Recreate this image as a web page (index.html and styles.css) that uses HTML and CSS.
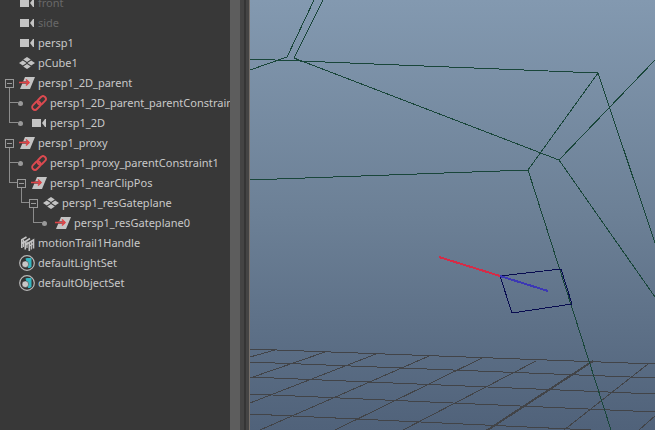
FILE: index.html
```html
<!DOCTYPE html>
<html lang="en">
<head>
<meta charset="utf-8">
<title>Outliner and viewport</title>
<link rel="stylesheet" href="styles.css">
</head>
<body>
<svg class="symbols" aria-hidden="true">
  <symbol id="camera" viewBox="0 0 16 16">
    <path fill="#c4c4c4" d="M1 4h9v8H1zM11 8l3-4h1v8h-1z"/>
  </symbol>
  <symbol id="mesh" viewBox="0 0 16 16">
    <path fill="#c4c4c4" d="M8 2l3.800 2.500L8 7 4.200 4.500zM3.800 5.500L7.600 8l-3.800 2.500L0 8zM12.200 5.500L16 8l-3.800 2.500L8.400 8zM8 9l3.800 2.500L8 14l-3.800-2.500z"/>
  </symbol>
  <symbol id="transform" viewBox="0 0 16 16">
    <path fill="#c4c4c4" d="M6 2h10l-5 12H1z"/>
    <path fill="none" stroke="#6a4a4a" stroke-width="2.500" d="M3 7.500h7"/>
    <path fill="none" stroke="#e04448" stroke-width="1.500" d="M0 7.500h10M7 4.500l3 3-3 3"/>
  </symbol>
  <symbol id="link" viewBox="0 0 16 16">
    <g fill="none" stroke="#dc4a50" stroke-width="1.900" transform="rotate(-45 8 8)">
      <rect x="-.5" y="5.200" width="9.500" height="5.600" rx="2.800"/>
      <rect x="7" y="5.200" width="9.500" height="5.600" rx="2.800"/>
    </g>
  </symbol>
  <symbol id="trail" viewBox="0 0 16 16">
    <g fill="none" stroke="#c4c4c4" stroke-width="1.600">
      <path d="M2.800 13V4.800L7.500 2M2.800 8.500L6 6.500"/>
      <path d="M6.300 14.500V6.500L11 3.500M6.300 10L10 7.500"/>
      <path d="M10.300 16V7.500L14.500 5v8.500"/>
      <path stroke-width="1.200" d="M4.500 12V5M8 13V6.500M12.300 14.500V7M10.300 11l4.200-2.500"/>
    </g>
  </symbol>
  <symbol id="set" viewBox="0 0 16 16">
    <circle cx="8" cy="8" r="7.300" fill="#333" stroke="#b8b8b8" stroke-width="1.200"/>
    <path fill="#35b5c0" d="M6.500 3.500L8 3h4.500v8.500L11 13H9z"/>
    <circle cx="6.300" cy="9.200" r="3.300" fill="#c8c8c8" stroke="#333" stroke-width=".5"/>
  </symbol>
</svg>
<main class="workspace">
  <aside class="outliner">
    <ul class="tree">
      <li><div class="row dim"><span class="slot"></span><svg class="icon"><use href="#camera"/></svg><span>front</span></div></li>
      <li><div class="row dim"><span class="slot"></span><svg class="icon"><use href="#camera"/></svg><span>side</span></div></li>
      <li><div class="row"><span class="slot"></span><svg class="icon"><use href="#camera"/></svg><span>persp1</span></div></li>
      <li><div class="row"><span class="slot"></span><svg class="icon"><use href="#mesh"/></svg><span>pCube1</span></div></li>
      <li>
        <div class="row"><span class="slot"><button class="toggle" aria-label="Collapse persp1_2D_parent"></button></span><svg class="icon"><use href="#transform"/></svg><span>persp1_2D_parent</span></div>
        <ul>
          <li><div class="row"><span class="slot"><i class="dot"></i></span><svg class="icon"><use href="#link"/></svg><span>persp1_2D_parent_parentConstrain</span></div></li>
          <li><div class="row"><span class="slot"><i class="dot"></i></span><svg class="icon"><use href="#camera"/></svg><span>persp1_2D</span></div></li>
        </ul>
      </li>
      <li>
        <div class="row"><span class="slot"><button class="toggle" aria-label="Collapse persp1_proxy"></button></span><svg class="icon"><use href="#transform"/></svg><span>persp1_proxy</span></div>
        <ul>
          <li><div class="row"><span class="slot"><i class="dot"></i></span><svg class="icon"><use href="#link"/></svg><span>persp1_proxy_parentConstraint1</span></div></li>
          <li>
            <div class="row"><span class="slot"><button class="toggle" aria-label="Collapse persp1_nearClipPos"></button></span><svg class="icon"><use href="#transform"/></svg><span>persp1_nearClipPos</span></div>
            <ul>
              <li>
                <div class="row"><span class="slot"><button class="toggle" aria-label="Collapse persp1_resGateplane"></button></span><svg class="icon"><use href="#mesh"/></svg><span>persp1_resGateplane</span></div>
                <ul>
                  <li><div class="row"><span class="slot"><i class="dot"></i></span><svg class="icon"><use href="#transform"/></svg><span>persp1_resGateplane0</span></div></li>
                </ul>
              </li>
            </ul>
          </li>
        </ul>
      </li>
      <li><div class="row"><span class="slot"></span><svg class="icon"><use href="#trail"/></svg><span>motionTrail1Handle</span></div></li>
      <li><div class="row"><span class="slot"></span><svg class="icon"><use href="#set"/></svg><span>defaultLightSet</span></div></li>
      <li><div class="row"><span class="slot"></span><svg class="icon"><use href="#set"/></svg><span>defaultObjectSet</span></div></li>
    </ul>
  </aside>
  <div class="scrollbar"></div>
  <div class="splitter"></div>
  <section class="viewport">
    <svg class="scene" viewBox="250 0 405 430" preserveAspectRatio="xMinYMin slice" role="img" aria-label="Perspective view">
      <g class="grid">
        <path d="M250 349L655 364M250 362L655 378M250 377L655 394M250 394L655 412M250 414L655 433"/>
        <path d="M275 350L250 357M325 352L250 378M376 354L250 403M429 356L260 430M482 358L335 430M536 361L403 430M648 364L564 430M655 416L639 430"/>
        <path class="axis" d="M593 361L486 431"/>
      </g>
      <g class="wire">
        <path d="M314 0L287 57 250 70M323 0L294 58 559 160 655 60M559 160L655 297"/>
        <path d="M250 59L598 73 528 170 250 180M598 73L655 243M528 170L611 430"/>
      </g>
      <path class="plane" d="M500 276L561 269 572 304 512 313z"/>
      <path class="ray red" d="M439 257L500 276"/>
      <path class="ray blue" d="M500 276L548 291"/>
    </svg>
  </section>
</main>
</body>
</html>
```
FILE: styles.css
```css
* { box-sizing: border-box; }

body {
  margin: 0;
  background: #383838;
  color: #c8c8c8;
  font: 11px/18px "Noto Sans", "Open Sans", sans-serif;
}

.symbols { display: none; }

.workspace {
  display: flex;
  height: 100vh;
  overflow: hidden;
}

.outliner {
  flex: 0 0 230px;
  overflow: hidden;
}

.tree, .tree ul {
  margin: 0;
  padding: 0;
  list-style: none;
}

/* The list is scrolled a little past its first row. */
.tree { margin-top: -7px; }
.tree ul { margin-left: 12px; }
.tree li { position: relative; }

.row {
  display: flex;
  align-items: center;
  height: 20px;
  white-space: nowrap;
}

.dim { color: #686868; }

.slot {
  position: relative;
  z-index: 1;
  display: flex;
  flex: 0 0 19px;
  padding-left: 5px;
}

.icon {
  flex: none;
  width: 16px;
  height: 16px;
  margin-right: 3px;
}

.toggle {
  width: 9px;
  height: 9px;
  padding: 0;
  border: 1px solid #999;
  background: linear-gradient(#999, #999) center / 5px 1px no-repeat #383838;
}

.dot {
  width: 5px;
  height: 5px;
  margin-left: 1px;
  border-radius: 50%;
  background: #999;
}

/* Connector lines between a parent and its children. */
.tree ul > li::before,
.tree ul > li::after {
  content: "";
  position: absolute;
  left: -3px;
  background: #8c8c8c;
}

.tree ul > li::before {
  top: -5px;
  bottom: 0;
  width: 1px;
}

.tree ul > li:last-child::before {
  bottom: auto;
  height: 15px;
}

.tree ul > li::after {
  top: 9px;
  width: 9px;
  height: 1px;
}

.scrollbar {
  flex: 0 0 10px;
  background: #5d5d5d;
}

.splitter {
  flex: 0 0 10px;
  background: linear-gradient(90deg, #444 4px, #353535 4px 6px, #444 6px 9px, #77716c 9px);
}

.viewport {
  flex: 1;
  min-width: 0;
  background: linear-gradient(#8399b0, #6c8096 50%, #50627a);
}

.scene {
  display: block;
  width: 100%;
  height: 100%;
  fill: none;
  shape-rendering: crispEdges;
}

.grid { stroke: #424448; }
.axis { stroke-width: 2; }
.wire { stroke: #19463a; }
.plane { stroke: #080c50; }
.ray { stroke-width: 2; }
.red { stroke: #d42c48; }
.blue { stroke: #3c38b4; }
```
